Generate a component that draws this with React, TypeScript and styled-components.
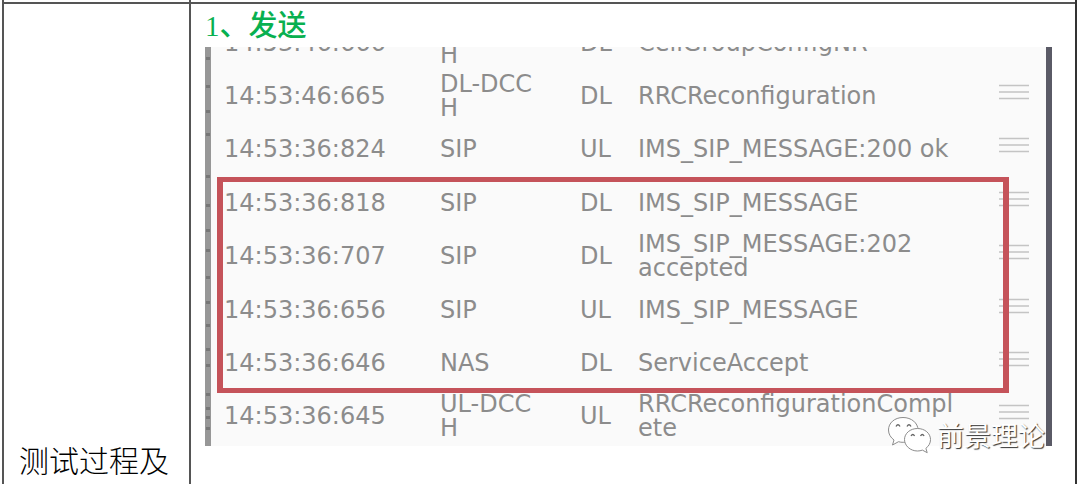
import React from "react";
import styled, { createGlobalStyle } from "styled-components";

const GlobalStyle = createGlobalStyle`
  * { box-sizing: border-box; }
  body { margin: 0; background: #fff; }
`;

const rule = "2px solid #555";

const Sheet = styled.main`
  margin: 0 3px 0 2px;
  border-left: ${rule};
  border-right: 2px solid #333;
`;

const SheetRow = styled.section`
  display: grid;
  grid-template-columns: 187px minmax(0, 1fr);
  border-bottom: ${rule};
  &:last-child { border-bottom: 0; }
`;

const StubCell = styled.div`
  height: 2px;
  border-right: ${rule};
`;

const LabelCell = styled.div`
  display: flex;
  align-items: flex-end;
  padding: 0 14px 7px 15px;
  border-right: ${rule};
  color: #000;
  font: 300 30px/36px "Noto Sans CJK SC", sans-serif;
  white-space: nowrap;
`;

const ContentCell = styled.div`
  padding: 0 23px 38px 14px;
`;

const Heading = styled.h2`
  margin: 0;
  height: 43px;
  color: #08b050;
  font: 500 29px/44px "Liberation Serif", "Noto Sans CJK SC", serif;
`;

const Capture = styled.div`
  position: relative;
  padding: 0 0 3px 13px;
  border-left: 6px solid #979797;
  border-right: 6px solid #5a5a66;
  background: #fafafa;
`;

const Clip = styled.div`
  display: flex;
  flex-direction: column;
  justify-content: flex-end;
  height: 396px;
  overflow: hidden;
`;

const LogTable = styled.table`
  flex: none;
  width: 100%;
  height: 427px;
  border-collapse: collapse;
  table-layout: fixed;
  color: #8c8c8c;
  font: 400 24px/24px "DejaVu Sans", sans-serif;
`;

const Cell = styled.td<{ $width?: number }>`
  width: ${(p) => (p.$width ? `${p.$width}px` : "auto")};
  height: 53px;
  padding: 0;
  vertical-align: middle;
  white-space: nowrap;
`;

const HandleCell = styled(Cell)`
  padding-bottom: 8px;
  svg { display: block; }
`;

const Highlight = styled.div`
  position: absolute;
  top: 130px;
  left: 6px;
  right: 37px;
  height: 216px;
  border: solid #c5535a;
  border-width: 5px 6px;
`;

const EdgeMarks = styled.svg`
  position: absolute;
  top: 0;
  left: -6px;
`;

const Watermark = styled.div`
  position: absolute;
  right: 1px;
  bottom: -8px;
  display: flex;
  align-items: center;
  gap: 5px;
  color: #fff;
  font: 400 27px/36px "Noto Sans CJK SC", sans-serif;
  text-shadow: 1px 1px 1px #333;
  white-space: nowrap;
`;

type Entry = { time: string; channel: string[]; direction: string; message: string[] };

const entries: Entry[] = [
  { time: "14:53:46:666", channel: ["DL-DCC", "H"], direction: "DL", message: ["CellGroupConfigNR"] },
  { time: "14:53:46:665", channel: ["DL-DCC", "H"], direction: "DL", message: ["RRCReconfiguration"] },
  { time: "14:53:36:824", channel: ["SIP"], direction: "UL", message: ["IMS_SIP_MESSAGE:200 ok"] },
  { time: "14:53:36:818", channel: ["SIP"], direction: "DL", message: ["IMS_SIP_MESSAGE"] },
  { time: "14:53:36:707", channel: ["SIP"], direction: "DL", message: ["IMS_SIP_MESSAGE:202", "accepted"] },
  { time: "14:53:36:656", channel: ["SIP"], direction: "UL", message: ["IMS_SIP_MESSAGE"] },
  { time: "14:53:36:646", channel: ["NAS"], direction: "DL", message: ["ServiceAccept"] },
  { time: "14:53:36:645", channel: ["UL-DCC", "H"], direction: "UL", message: ["RRCReconfigurationCompl", "ete"] },
];

const Lines = ({ parts }: { parts: string[] }) => (
  <>
    {parts.map((part, i) => (
      <React.Fragment key={part}>
        {i > 0 && <br />}
        {part}
      </React.Fragment>
    ))}
  </>
);

const Handle = () => (
  <svg width="30" height="16" viewBox="0 0 30 16" aria-hidden="true">
    <path d="M0 1.5H30M0 8H30M0 14.5H30" stroke="#c4c4c4" strokeWidth="1.6" />
  </svg>
);

const marks = [10, 38, 63, 86, 128, 157, 182, 202, 229, 254, 277, 301, 317, 346, 360, 369, 380];

const ChatLogo = () => (
  <svg width="45" height="38" viewBox="0 0 45 38" fill="#fff" stroke="#8c8c8c" strokeWidth="1" aria-hidden="true">
    <path d="M16 1.500C7.500 1.500 1.500 7 1.500 14c0 4.200 2.200 7.500 5.500 10L5.500 29l6-3.300c1.600.5 3 .6 4.700.6 8.400 0 14.800-5.300 14.800-12.300S24.500 1.500 16 1.500Z" />
    <path d="M30.500 12.500c-7.300 0-13 4.900-13 11s5.700 11.500 13 11.500c1.800 0 3.300-.3 4.900-.9l4.800 2.600-1.300-4.400c2.900-2.200 4.600-5.200 4.600-8.800 0-6.100-5.700-11-13-11Z" />
    <path d="M9 10.500q2-3.500 4 0M20 10.500q2-3.500 4 0M24 20q1.800-3 3.600 0M33.500 20q1.800-3 3.600 0" fill="none" stroke="#666" strokeWidth="1.300" />
  </svg>
);

export default function App() {
  return (
    <>
      <GlobalStyle />
      <Sheet>
        <SheetRow>
          <StubCell />
        </SheetRow>
        <SheetRow>
          <LabelCell>测试过程及</LabelCell>
          <ContentCell>
            <Heading>1、发送</Heading>
            <Capture>
              <Clip>
                <LogTable>
                  <tbody>
                    {entries.map((e) => (
                      <tr key={e.time}>
                        <Cell $width={216}>{e.time}</Cell>
                        <Cell $width={140}><Lines parts={e.channel} /></Cell>
                        <Cell $width={58}>{e.direction}</Cell>
                        <Cell><Lines parts={e.message} /></Cell>
                        <HandleCell $width={47}><Handle /></HandleCell>
                      </tr>
                    ))}
                  </tbody>
                </LogTable>
              </Clip>
              <EdgeMarks width="6" height="399" aria-hidden="true">
                {marks.map((y) => (
                  <rect key={y} x="1" y={y} width="4" height="3" fill="#777" />
                ))}
              </EdgeMarks>
              <Highlight />
              <Watermark>
                <ChatLogo />
                <span>前景理论</span>
              </Watermark>
            </Capture>
          </ContentCell>
        </SheetRow>
      </Sheet>
    </>
  );
}
